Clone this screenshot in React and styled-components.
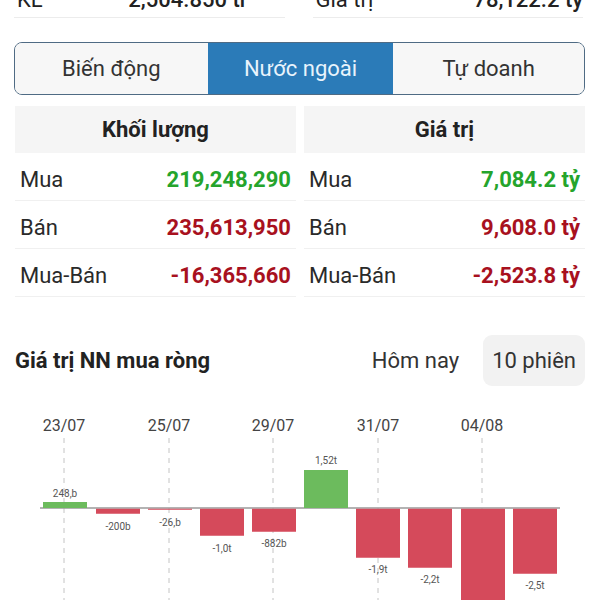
import React from "react";
import styled, { createGlobalStyle } from "styled-components";

const Global = createGlobalStyle`
  html, body { margin: 0; padding: 0; background: #fff; overflow: hidden; }
  body { font-family: Roboto, "Noto Sans", "Liberation Sans", sans-serif; color: #222; }
`;

const Page = styled.div`
  width: 600px;
  height: 600px;
  overflow: hidden;
  padding: 0 15px;
  box-sizing: border-box;
`;

const StatsRow = styled.div`
  display: grid;
  grid-template-columns: 1fr 1fr;
  column-gap: 28px;
  margin-top: -15px;
  padding-right: 2px;
  margin-left: -1px;
`;

const StatItem = styled.div`
  display: flex;
  justify-content: space-between;
  padding: 2px 0 4px;
  line-height: 26px;
  font-size: 22px;
  border-bottom: 1px solid #ececec;
  padding-right: ${(p) => p.$pr || 0}px;
  padding-left: 3px;
`;

const StatValue = styled.span`
  font-weight: 500;
`;

const Tabs = styled.div`
  display: flex;
  margin: 24px 0 0 -1px;
  height: 53px;
  box-sizing: border-box;
  border: 1.5px solid #4f6b84;
  border-radius: 8px;
  overflow: hidden;
  background: #f7f7f7;
`;

const Tab = styled.div`
  flex: ${(p) => p.$flex};
  display: flex;
  align-items: center;
  justify-content: center;
  font-size: 22px;
  color: ${(p) => (p.$active ? "#e8f3fc" : "#333")};
  background: ${(p) => (p.$active ? "#2b7bb8" : "#f7f7f7")};
`;

const Tables = styled.div`
  display: grid;
  grid-template-columns: 1fr 1fr;
  column-gap: 8px;
  margin-top: 11px;
`;

const Table = styled.div`
  display: flex;
  flex-direction: column;
`;

const TableHead = styled.div`
  height: 47px;
  background: #f5f5f5;
  display: flex;
  align-items: center;
  justify-content: center;
  font-size: 22px;
  font-weight: 700;
  color: #222;
`;

const Row = styled.div`
  height: 48px;
  box-sizing: border-box;
  border-bottom: 1px solid #f0f0f0;
  display: flex;
  align-items: center;
  justify-content: space-between;
  padding: 5px 5px 0 5px;
  font-size: 22px;
`;

const Label = styled.span`
  color: #2a2a2a;
`;

const Value = styled.span`
  font-weight: 700;
  color: ${(p) => (p.$up ? "#25a42c" : "#a8111e")};
`;

const SectionHeader = styled.div`
  display: flex;
  align-items: center;
  margin-top: 38px;
  height: 51px;
`;

const SectionTitle = styled.div`
  flex: 1;
  font-size: 22px;
  font-weight: 700;
  color: #222;
`;

const RangeButton = styled.div`
  height: 51px;
  display: flex;
  align-items: center;
  padding: 0 9px;
  margin-left: ${(p) => p.$ml || 0}px;
  border-radius: 9px;
  font-size: 22px;
  color: #333;
  background: ${(p) => (p.$active ? "#f2f2f2" : "transparent")};
`;

const Chart = styled.svg`
  display: block;
  margin-top: 10px;
  overflow: visible;
`;

const dates = [
  { x: 64, t: "23/07" },
  { x: 169, t: "25/07" },
  { x: 273, t: "29/07" },
  { x: 378, t: "31/07" },
  { x: 482, t: "04/08" },
];

const bars = [
  { x: 43, h: 6, up: true, label: "248,b", ly: 492 },
  { x: 96, h: 5, up: false, label: "-200b", ly: 525 },
  { x: 148, h: 1, up: false, label: "-26,b", ly: 521 },
  { x: 200, h: 27, up: false, label: "-1,0t", ly: 547 },
  { x: 252, h: 23, up: false, label: "-882b", ly: 542 },
  { x: 304, h: 38, up: true, label: "1,52t", ly: 459 },
  { x: 356, h: 49, up: false, label: "-1,9t", ly: 568 },
  { x: 408, h: 59, up: false, label: "-2,2t", ly: 578 },
  { x: 461, h: 110, up: false, label: "", ly: 0 },
  { x: 513, h: 65, up: false, label: "-2,5t", ly: 584 },
];

const TOP = 395;
const ZERO = 507 - TOP;

export default function App() {
  return (
    <Page>
      <Global />
      <StatsRow>
        <StatItem $pr={37}>
          <span>KL</span>
          <StatValue>2,504.850 tr</StatValue>
        </StatItem>
        <StatItem>
          <span>Giá trị</span>
          <StatValue>78,122.2 tỷ</StatValue>
        </StatItem>
      </StatsRow>

      <Tabs>
        <Tab $flex={193}>Biến động</Tab>
        <Tab $flex={186} $active>Nước ngoài</Tab>
        <Tab $flex={191}>Tự doanh</Tab>
      </Tabs>

      <Tables>
        <Table>
          <TableHead>Khối lượng</TableHead>
          <Row><Label>Mua</Label><Value $up>219,248,290</Value></Row>
          <Row><Label>Bán</Label><Value>235,613,950</Value></Row>
          <Row><Label>Mua-Bán</Label><Value>-16,365,660</Value></Row>
        </Table>
        <Table>
          <TableHead>Giá trị</TableHead>
          <Row><Label>Mua</Label><Value $up>7,084.2 tỷ</Value></Row>
          <Row><Label>Bán</Label><Value>9,608.0 tỷ</Value></Row>
          <Row><Label>Mua-Bán</Label><Value>-2,523.8 tỷ</Value></Row>
        </Table>
      </Tables>

      <SectionHeader>
        <SectionTitle>Giá trị NN mua ròng</SectionTitle>
        <RangeButton>Hôm nay</RangeButton>
        <RangeButton $active $ml={15}>10 phiên</RangeButton>
      </SectionHeader>

      <Chart width="570" height="215" viewBox="15 0 570 215">
        {dates.map((d) => (
          <g key={d.t}>
            <text
              x={d.x}
              y={35}
              textAnchor="middle"
              fontSize="16"
              fill="#444"
              fontFamily="Roboto, sans-serif"
            >
              {d.t}
            </text>
            <line
              x1={d.x}
              x2={d.x}
              y1={42}
              y2={215}
              stroke="#c4c4c4"
              strokeWidth="1"
              strokeDasharray="5 5"
            />
          </g>
        ))}
        <line x1={40} x2={560} y1={ZERO} y2={ZERO} stroke="#9a9a9a" strokeWidth="1.5" />
        {bars.map((b, i) => (
          <g key={i}>
            <rect
              x={b.x}
              y={b.up ? ZERO - b.h : ZERO + 0.75}
              width={44}
              height={b.h}
              fill={b.up ? "#6cbb5d" : "#d54a5b"}
            />
            {b.label && (
              <text
                x={b.x + 22}
                y={b.ly - TOP + 3.5}
                textAnchor="middle"
                fontSize="10"
                fill="#555"
                fontFamily="Roboto, sans-serif"
              >
                {b.label}
              </text>
            )}
          </g>
        ))}
      </Chart>
    </Page>
  );
}
